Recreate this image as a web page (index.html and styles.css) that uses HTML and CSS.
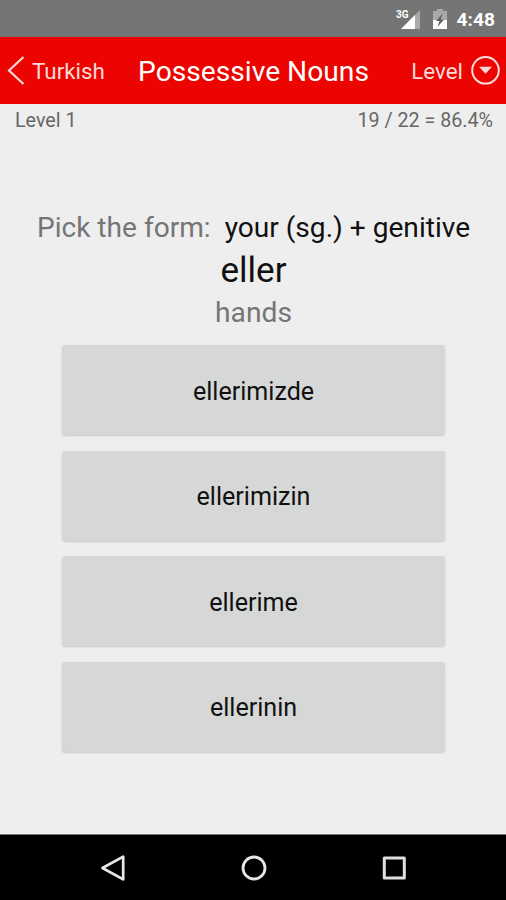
FILE: index.html
```
<!doctype html>

<html lang="en">
	<head>
		<meta charset="utf-8">
		<meta name="viewport" content="width=device-width, initial-scale=1">
		<title>Possessive Nouns</title>
		<link rel="stylesheet" href="styles.css">
	</head>
	<body>
		<div id="statusbar">
			<svg class="signal" width="26" height="22" viewBox="0 0 26 22">
				<path d="M24 1V20H5Z" fill="#a9a9a9"/>
				<path d="M19 6V20H5Z" fill="#fff"/>
				<text class="network" x="0" y="9">3G</text>
			</svg>
			<svg class="battery" width="14" height="21" viewBox="0 0 14 21">
				<path d="M4 0H10V2H14V11H0V2H4Z" fill="#a9a9a9"/>
				<path d="M0 11H14V20H0Z" fill="#fff"/>
				<path d="M10 4L3 12H6.5L4.5 18L11 10.5H7.5Z" fill="#606060"/>
			</svg>
			<span id="clock">4:48</span>
		</div>

		<div id="header">
			<button class="nav-link back">
				<svg width="18" height="30" viewBox="0 0 18 30">
					<path d="M16.5 1L2 14.5L16.5 28" fill="none" stroke="#fbd9d9" stroke-width="2.2"/>
				</svg>
				<span>Turkish</span>
			</button>
			<h1>Possessive Nouns</h1>
			<button class="nav-link level">
				<span>Level</span>
				<svg width="30" height="30" viewBox="0 0 30 30">
					<circle cx="15.5" cy="14.3" r="13.3" fill="none" stroke="#fbdede" stroke-width="2"/>
					<path d="M9 10.8H22L15.5 17.8Z" fill="#fbd9d9"/>
				</svg>
			</button>
		</div>

		<div id="score">
			<span class="score-level">Level 1</span>
			<span class="score-total">19 / 22 = 86.4%</span>
		</div>

		<div id="quiz">
			<div class="prompt"><span class="label">Pick the form:</span><span class="form">your (sg.) + genitive</span></div>
			<div class="word">eller</div>
			<div class="meaning">hands</div>
			<div id="answers">
				<button>ellerimizde</button>
				<button>ellerimizin</button>
				<button>ellerime</button>
				<button>ellerinin</button>
			</div>
		</div>

		<div id="navbar">
			<svg width="26" height="28" viewBox="0 0 26 28">
				<path d="M23.2 2.6V25.4L2.5 14Z" fill="none" stroke="#e6e6e6" stroke-width="2.7" stroke-linejoin="round"/>
			</svg>
			<svg width="26" height="28" viewBox="0 0 26 28">
				<circle cx="13" cy="14" r="11" fill="none" stroke="#e6e6e6" stroke-width="2.8"/>
			</svg>
			<svg width="26" height="28" viewBox="0 0 26 28">
				<rect x="3.3" y="4" width="20" height="20" fill="none" stroke="#e0e0e0" stroke-width="3" stroke-linejoin="round"/>
			</svg>
		</div>
	</body>
</html>
```
FILE: styles.css
```
body, html {
	margin: 0;
	padding: 0;
	height: 100%;
	background: #eee;
	font-family: Roboto, sans-serif;
}

body {
	display: flex;
	flex-direction: column;
	overflow: hidden;
}

button {
	margin: 0;
	padding: 0;
	border: 0;
	font-family: inherit;
}

svg {
	display: block;
	flex-shrink: 0;
}

#statusbar {
	flex: none;
	height: 37px;
	box-sizing: border-box;
	padding: 2px 11px 0 0;
	background: #757575;
	color: #fff;
	display: flex;
	align-items: center;
	justify-content: right;
}

.signal {
	margin-right: 11px;
}

.network {
	font-size: 10px;
	font-weight: 700;
	fill: #fff;
}

.battery {
	margin-right: 10px;
}

#clock {
	font-size: 19.2px;
	font-weight: 700;
}

#header {
	flex: none;
	height: 67px;
	box-sizing: border-box;
	padding: 2px 6px 0 7px;
	background: #eb0400;
	display: grid;
	grid-template-columns: 1fr auto 1fr;
	align-items: center;
}

h1 {
	margin: 0;
	color: #fff;
	font-size: 28.2px;
	font-weight: 400;
	white-space: nowrap;
}

.nav-link {
	padding-bottom: 2px;
	background: none;
	color: #fbd9d9;
	display: flex;
	align-items: center;
	gap: 7px;
	font-size: 22.4px;
}

.level {
	justify-self: end;
}

#score {
	flex: none;
	height: 32px;
	padding: 0 13px 0 15px;
	color: #666;
	display: flex;
	align-items: center;
	justify-content: space-between;
	font-size: 19.7px;
}

#quiz {
	flex: 1;
	padding: 71px 0 0 1px;
	text-align: center;
}

.prompt {
	font-size: 28.1px;
	line-height: 42px;
	white-space: nowrap;
}

.label {
	margin-right: 14px;
	color: #757575;
}

.form {
	color: #111;
}

.word {
	color: #111;
	font-size: 35px;
	line-height: 43px;
}

.meaning {
	color: #757575;
	font-size: 28.2px;
	line-height: 41px;
}

#answers {
	width: 383px;
	margin: 12px auto 0;
	display: grid;
	grid-auto-rows: 90px;
	gap: 15.6px;
}

#answers button {
	padding-top: 2px;
	border-radius: 3px;
	background: #d6d8d7;
	box-shadow: 0 1px 2px rgba(0, 0, 0, 0.15);
	color: #111;
	font-size: 25.1px;
}

#navbar {
	flex: none;
	height: 65px;
	padding-left: 1px;
	background: #000;
	border-top: 1px solid #777;
	display: flex;
	align-items: center;
	justify-content: center;
	gap: 114.5px;
}
```
